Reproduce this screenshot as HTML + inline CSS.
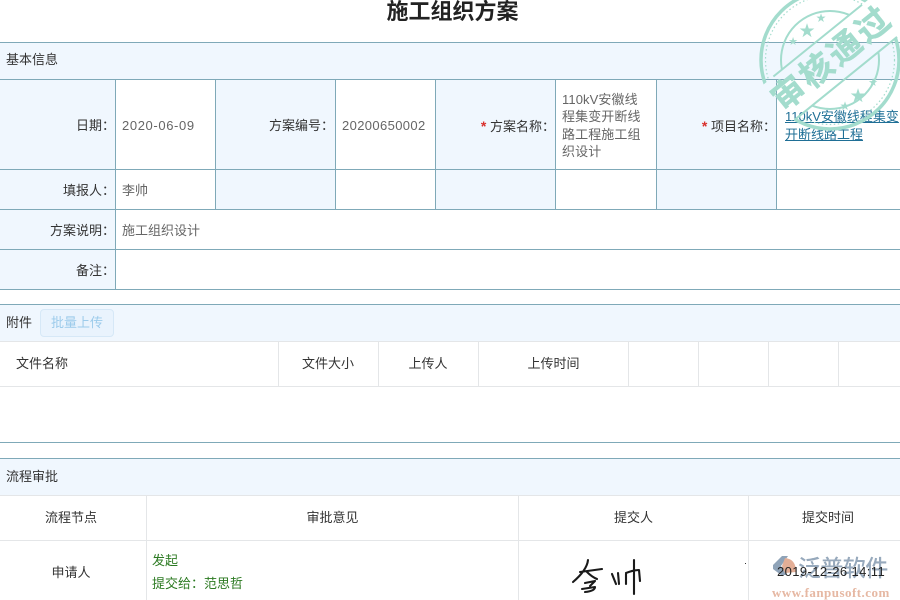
<!DOCTYPE html>
<html><head><meta charset="utf-8"><style>
html,body{margin:0;padding:0;background:#fff}
body{width:900px;height:600px;overflow:hidden;position:relative;font:13px/20px "Liberation Sans","Noto Sans CJK SC",sans-serif;color:#333}
div{position:absolute;box-sizing:border-box}
.h{left:0;width:900px;height:1px;background:#7fa9b8}
.g{background:#e4e6e8}
.v{width:1px;background:#7fa9b8}
.gv{width:1px;background:#e4e6e8}
.b{background:#f0f7fe}
.t{white-space:nowrap}
.r{text-align:right;white-space:nowrap}
.c{text-align:center;white-space:nowrap}
.val{color:#666;white-space:nowrap}
i{font-style:normal;font-weight:bold;font-size:14px;color:#d9302c}
</style></head><body>
<div class="c" style="left:0;top:-2px;width:905px;font-size:22px;line-height:28px;font-weight:bold;color:#222">施工组织方案</div>

<div class="b" style="left:0;top:42px;width:900px;height:37px"></div>
<div class="b" style="left:0;top:79px;width:115px;height:210px"></div>
<div class="b" style="left:216px;top:79px;width:119px;height:130px"></div>
<div class="b" style="left:436px;top:79px;width:119px;height:130px"></div>
<div class="b" style="left:657px;top:79px;width:119px;height:130px"></div>
<div class="b" style="left:0;top:304px;width:900px;height:37px"></div>
<div class="b" style="left:0;top:458px;width:900px;height:37px"></div>

<div class="h" style="top:42px"></div><div class="h" style="top:79px"></div><div class="h" style="top:169px"></div><div class="h" style="top:209px"></div><div class="h" style="top:249px"></div><div class="h" style="top:289px"></div>
<div class="v" style="left:115px;top:79px;height:210px"></div>
<div class="v" style="left:215px;top:79px;height:130px"></div>
<div class="v" style="left:335px;top:79px;height:130px"></div>
<div class="v" style="left:435px;top:79px;height:130px"></div>
<div class="v" style="left:555px;top:79px;height:130px"></div>
<div class="v" style="left:656px;top:79px;height:130px"></div>
<div class="v" style="left:776px;top:79px;height:130px"></div>

<div class="t" style="left:6px;top:50px">基本信息</div>
<div class="r" style="left:0;top:116px;width:115px">日期：</div>
<div class="val" style="left:122px;top:116px;letter-spacing:.62px">2020-06-09</div>
<div class="r" style="left:216px;top:116px;width:118px">方案编号：</div>
<div class="val" style="left:342px;top:116px;letter-spacing:.37px">20200650002</div>
<div class="r" style="left:436px;top:116px;width:119px"><i>*</i> 方案名称：</div>
<div class="val" style="left:562px;top:91px;width:84px;line-height:17.3px;white-space:normal;word-break:break-all;letter-spacing:.1px">110kV安徽线程集变开断线路工程施工组织设计</div>
<div class="r" style="left:657px;top:116px;width:119px"><i>*</i> 项目名称：</div>
<div style="left:785px;top:108px;width:115px;line-height:17.5px;color:#1f6f96;text-decoration:underline;word-break:break-all">110kV安徽线程集变开断线路工程</div>
<div class="r" style="left:0;top:181px;width:115px">填报人：</div>
<div class="val" style="left:122px;top:181px">李帅</div>
<div class="r" style="left:0;top:221px;width:115px">方案说明：</div>
<div class="val" style="left:122px;top:221px">施工组织设计</div>
<div class="r" style="left:0;top:261px;width:115px">备注：</div>

<div class="h" style="top:304px"></div>
<div class="t" style="left:6px;top:313px">附件</div>
<div class="c" style="left:40px;top:309px;width:74px;height:28px;border:1px solid #d6e8f7;border-radius:4px;background:#e9f3fd;color:#9ccbeb;line-height:26px">批量上传</div>
<div class="h g" style="top:341px"></div><div class="h g" style="top:386px"></div>
<div class="gv" style="left:278px;top:341px;height:45px"></div>
<div class="gv" style="left:378px;top:341px;height:45px"></div>
<div class="gv" style="left:478px;top:341px;height:45px"></div>
<div class="gv" style="left:628px;top:341px;height:45px"></div>
<div class="gv" style="left:698px;top:341px;height:45px"></div>
<div class="gv" style="left:768px;top:341px;height:45px"></div>
<div class="gv" style="left:838px;top:341px;height:45px"></div>
<div class="t" style="left:16px;top:354px">文件名称</div>
<div class="c" style="left:279px;top:354px;width:98px">文件大小</div>
<div class="c" style="left:379px;top:354px;width:98px">上传人</div>
<div class="c" style="left:479px;top:354px;width:149px">上传时间</div>
<div class="h" style="top:442px"></div>

<div class="h" style="top:458px"></div>
<div class="t" style="left:6px;top:467px">流程审批</div>
<div class="h g" style="top:495px"></div><div class="h g" style="top:540px"></div>
<div class="gv" style="left:146px;top:495px;height:105px"></div>
<div class="gv" style="left:518px;top:495px;height:105px"></div>
<div class="gv" style="left:748px;top:495px;height:105px"></div>
<div class="c" style="left:0;top:508px;width:142px">流程节点</div>
<div class="c" style="left:147px;top:508px;width:371px">审批意见</div>
<div class="c" style="left:519px;top:508px;width:229px">提交人</div>
<div class="c" style="left:749px;top:508px;width:158px">提交时间</div>
<div class="c" style="left:0;top:563px;width:142px">申请人</div>
<div class="t" style="left:152px;top:551px;color:#2c7a22">发起</div>
<div class="t" style="left:152px;top:574px;color:#2c7a22">提交给：范思哲</div>

<svg style="position:absolute;left:560px;top:550px" width="100" height="50" viewBox="0 0 100 50" fill="none" stroke="#1a1a1a" stroke-width="2.1" stroke-linecap="round" stroke-linejoin="round">
<path d="M28 10Q27 20 13 32M20 22L42 19M27 22Q32 27 37 29"/>
<path d="M25 33L35 31L30 36M22 39L35 37Q35 41 25 42"/>
<path d="M52 24L56 34M58 23L59 34"/>
<path d="M66 24V34M66 23Q74 20 79 20L80 31M74 10V44"/>
</svg>
<div style="left:745px;top:563px;width:1px;height:1px;background:#333"></div>

<svg style="position:absolute;left:750px;top:0" width="150" height="132" viewBox="750 0 150 132">
<defs><mask id="m" maskUnits="userSpaceOnUse" x="750" y="0" width="150" height="132"><rect x="750" y="0" width="150" height="132" fill="#fff"/><rect x="750" y="37" width="160" height="47" fill="#000" transform="rotate(-39 830 59)"/></mask></defs>
<g fill="none" stroke="#a3dccd" mask="url(#m)">
<circle cx="830" cy="60" r="69" stroke-width="3.5"/>
<circle cx="830" cy="60" r="64.5" stroke-width="1.2" stroke-dasharray="1.5 2.5"/>
<circle cx="830" cy="60" r="49" stroke-width="2"/>
</g>
<g transform="rotate(-39 830 59)" stroke="#a3dccd" stroke-width="2">
<path d="M775 37H889M764 84H896" fill="none"/>
<text x="832" y="71" stroke-width=".5" text-anchor="middle" font-family="Liberation Sans,Noto Sans CJK SC,sans-serif" font-weight="bold" font-size="33" letter-spacing="3" fill="#a3dccd">审核通过</text>
</g>
<g fill="#a3dccd" font-family="DejaVu Sans,sans-serif" text-anchor="middle">
<text x="807" y="37" font-size="19">★</text><text x="821" y="22" font-size="12">★</text><text x="793" y="45" font-size="11">★</text>
<text x="858" y="102" font-size="19">★</text><text x="873" y="86" font-size="11">★</text><text x="845" y="110" font-size="12">★</text>
</g>
</svg>

<svg style="position:absolute;left:760px;top:545px" width="140" height="55" viewBox="0 0 140 55">
<path d="M13 20L22 11H28L21 21L27 30H21L13 24Z" fill="#8fa3b8"/>
<path d="M25 13Q36 14 36 27L25 28L22 21Z" fill="#e3ae96"/>
<text x="38" y="31" font-family="Liberation Sans,Noto Sans CJK SC,sans-serif" font-size="23" font-weight="500" letter-spacing="-.6" fill="#97a9bc">泛普软件</text>
<text x="12" y="52" font-family="Liberation Serif,serif" font-size="13" font-weight="bold" letter-spacing=".47" fill="#e6b8a3">www.fanpusoft.com</text>
</svg>
<div class="t" style="left:777px;top:562px;color:#222;letter-spacing:.4px">2019-12-26 14:11</div>
</body></html>
